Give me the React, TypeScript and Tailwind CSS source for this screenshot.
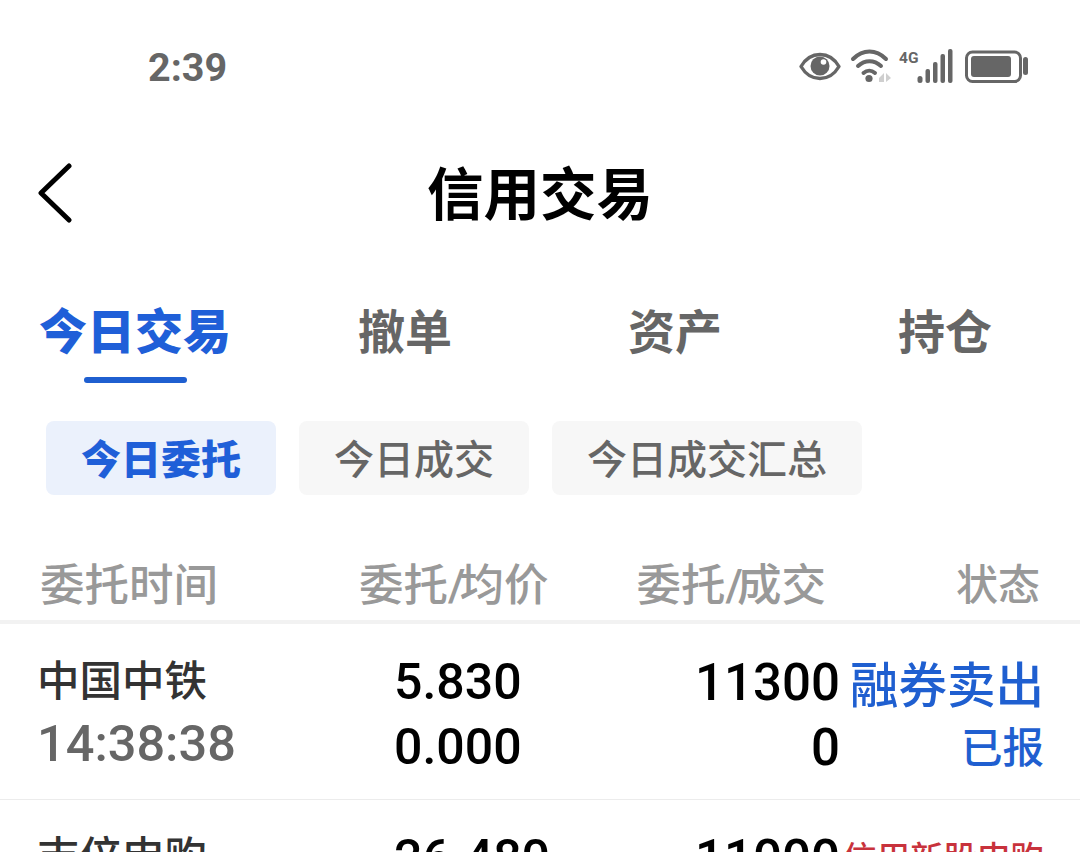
import React from "react";

const cjk = "font-['Roboto','Noto_Sans_CJK_SC',sans-serif]";

function StatusIcons() {
  return (
    <svg width="232" height="44" viewBox="798 46 232 44" className="block" aria-hidden="true">
      <path d="M801 66.500C806 58 813 54.500 820 54.500S834 58 839 66.500C834 75 827 78.500 820 78.500S806 75 801 66.500Z" fill="none" stroke="#666" strokeWidth="3.400" strokeLinejoin="round" />
      <circle cx="820" cy="66" r="9.500" fill="#666" />
      <circle cx="823.500" cy="62" r="2.800" fill="#fff" />
      <g fill="none" stroke="#666" strokeWidth="4" strokeLinecap="round">
        <path d="M853 59C863 49 876 49 886 59" />
        <path d="M858 66C865 59.500 874 59.500 881 66" />
        <path d="M863.500 73C867 70 871.500 70 875 73" />
      </g>
      <circle cx="869" cy="78.500" r="3.600" fill="#666" />
      <path d="M879 78 884 73V82H879Z M886 73 891 78 886 82Z" fill="#cfcfcf" />
      <text x="899" y="63" fontSize="15.500" fontWeight="700" fill="#666" fontFamily="Roboto, sans-serif">4G</text>
      <g fill="#666">
        <rect x="917.500" y="76" width="5" height="7" rx="2.500" />
        <rect x="925.500" y="69" width="4.500" height="14" rx="2" />
        <rect x="933" y="62" width="4.500" height="21" rx="2" />
        <rect x="940.500" y="54" width="4.500" height="29" rx="2" />
        <rect x="948" y="49" width="4.500" height="34" rx="2" />
        <rect x="966.500" y="52" width="54" height="29.500" rx="6" fill="none" stroke="#666" strokeWidth="3" />
        <rect x="971" y="56" width="40" height="21" rx="3" />
        <rect x="1023" y="57" width="5" height="18" rx="2.500" />
      </g>
    </svg>
  );
}

function Row({ name, time, price, avg, qty, done, action, status, red }: { name: string; time: string; price: string; avg: string; qty: string; done: string; action: string; status: string; red?: boolean }) {
  return (
    <div className="flex h-[176px] border-b border-[#ececec] pt-[26px] pl-[37px] pr-[36px] text-black">
      <div className="w-[357px] shrink-0">
        <div className="mt-[4px] h-[56px] text-[42.500px] font-medium leading-[56px] text-[#333]">{name}</div>
        <div className="mt-[6px] h-[56px] text-[50.500px] font-medium leading-[56px] text-[#666]">{time}</div>
      </div>
      <div className="w-[240px] shrink-0 text-[50px] font-medium leading-[65px]">
        <div>{price}</div>
        <div>{avg}</div>
      </div>
      <div className="w-[206px] shrink-0 text-right text-[51px] font-medium leading-[65px]">
        <div>{qty}</div>
        <div>{done}</div>
      </div>
      <div className="flex-1 text-right font-medium">
        <div className={red ? "h-[66px] whitespace-nowrap text-[33.500px] leading-[66px] text-[#c8323c]" : "mt-[4px] h-[66px] whitespace-nowrap text-[48.500px] leading-[66px] text-[#1f5fd0]"}>{action}</div>
        <div className="-mt-[4px] h-[66px] text-[41.500px] leading-[66px] text-[#1f5fd0]">{status}</div>
      </div>
    </div>
  );
}

export default function App() {
  return (
    <div className={`${cjk} h-[852px] w-[1080px] overflow-hidden bg-white`}>
      <div className="flex h-[135px] items-start justify-between pt-[46px] pl-[148px] pr-[50px]">
        <div className="text-[39.500px] font-bold leading-[44px] text-[#666]">2:39</div>
        <StatusIcons />
      </div>
      <div className="relative flex h-[116px] items-center justify-center">
        <svg width="36" height="60" viewBox="0 0 36 60" className="absolute left-[37px] top-[28px]" aria-hidden="true">
          <path d="M32 3 4 30l28 27" fill="none" stroke="#000" strokeWidth="5" strokeLinecap="round" strokeLinejoin="round" />
        </svg>
        <div className="mt-[5px] text-[56.500px] font-bold leading-[80px] text-black">信用交易</div>
      </div>
      <div className="grid h-[131px] grid-cols-4 pt-[48px] text-[47px] leading-[68px] text-[#666]">
        <div className="relative text-center text-[48px] font-black text-[#1f5fd8]">
          今日交易
          <div className="absolute left-[84px] top-[78px] h-[6px] w-[103px] rounded-full bg-[#1f5fd0]" />
        </div>
        <div className="text-center font-bold">撤单</div>
        <div className="text-center font-bold">资产</div>
        <div className="text-center font-bold">持仓</div>
      </div>
      <div className="mt-[39px] flex gap-[23px] pl-[46px] text-[40px] leading-[80px] text-[#666]">
        <div className="h-[74px] w-[230px] rounded-[8px] bg-[#ebf1fc] text-center font-black text-[#1f5fd8]">今日委托</div>
        <div className="h-[74px] w-[230px] rounded-[8px] bg-[#f7f7f7] text-center font-medium">今日成交</div>
        <div className="h-[74px] w-[310px] rounded-[8px] bg-[#f7f7f7] text-center font-medium">今日成交汇总</div>
      </div>
      <div className="mt-[63px] flex h-[66px] border-b-[4px] border-[#f2f2f2] pl-[40px] pr-[40px] text-[44.500px] font-medium leading-[56px] text-[#999]">
        <div className="w-[319px] shrink-0">委托时间</div>
        <div className="w-[188px] shrink-0 whitespace-nowrap">委托<span className="tracking-[-6px]">/</span>均价</div>
        <div className="w-[279px] shrink-0 whitespace-nowrap text-right">委托<span className="tracking-[-6px]">/</span>成交</div>
        <div className="flex-1 text-right text-[42px]">状态</div>
      </div>
      <Row name="中国中铁" time="14:38:38" price="5.830" avg="0.000" qty="11300" done="0" action="融券卖出" status="已报" />
      <Row name="吉倍申购" time="14:38:38" price="26.480" avg="0.000" qty="11000" done="0" action="信用新股申购" status="已报" red />
    </div>
  );
}
